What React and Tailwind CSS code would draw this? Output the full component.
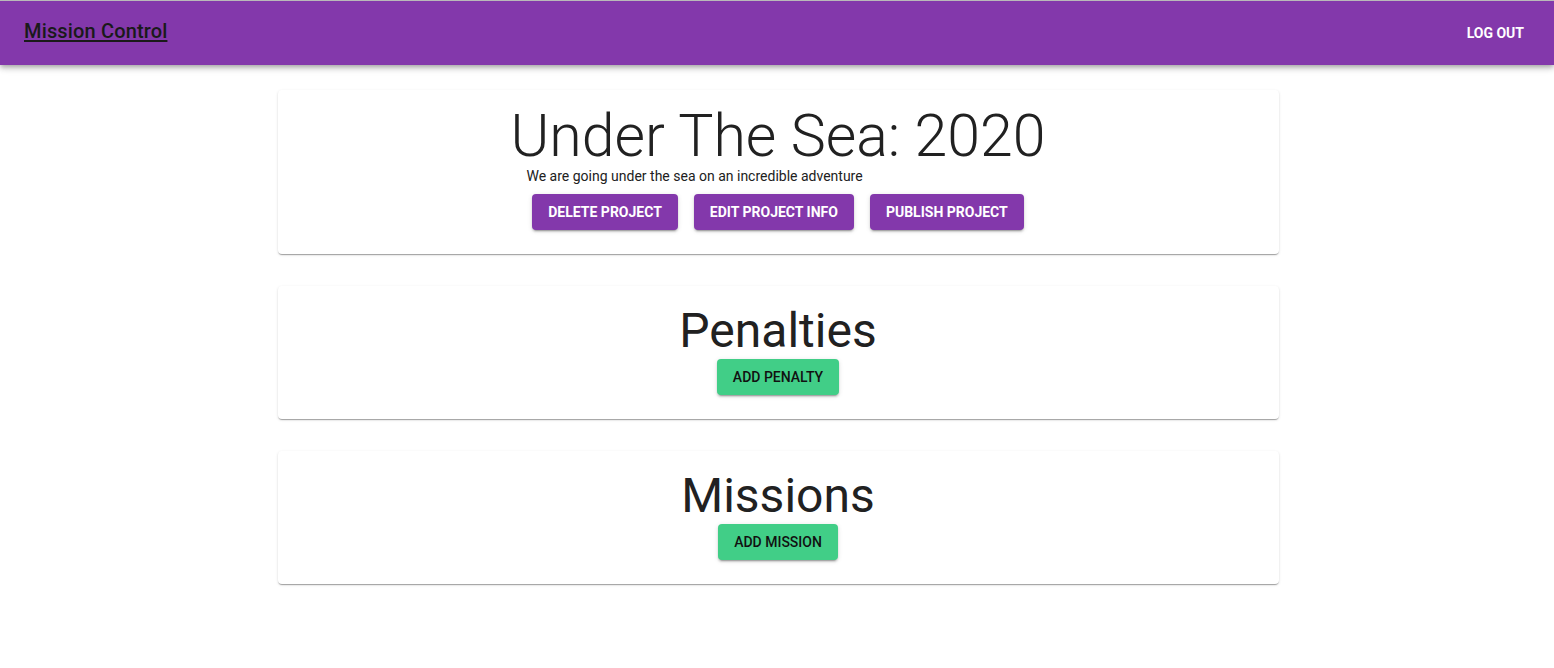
export default function App() {
  const purpleBtn =
    "bg-[#8338ab] text-white text-[14px] font-bold uppercase leading-[24px] px-4 py-[6px] rounded-[4px] shadow-[0_3px_1px_-2px_rgba(0,0,0,0.2),0_2px_2px_0_rgba(0,0,0,0.14),0_1px_5px_0_rgba(0,0,0,0.12)]";
  const greenBtn =
    "bg-[#41ce87] text-[#111] text-[14px] font-medium uppercase leading-[24px] px-4 py-[6px] rounded-[4px] shadow-[0_3px_1px_-2px_rgba(0,0,0,0.2),0_2px_2px_0_rgba(0,0,0,0.14),0_1px_5px_0_rgba(0,0,0,0.12)]";
  const card =
    "w-[1001px] mx-auto bg-white rounded-[4px] shadow-[0_2px_1px_-1px_rgba(0,0,0,0.2),0_1px_1px_0_rgba(0,0,0,0.14),0_1px_3px_0_rgba(0,0,0,0.12)] flex flex-col items-center pt-4 pb-6";
  return (
    <div className="min-h-[668px] bg-white font-['Roboto',sans-serif] text-[#212121]">
      <header className="h-[65px] bg-[#8338ab] border-t border-[#b9b9b9] flex items-center justify-between pl-6 pr-[22px] shadow-[0_2px_4px_-1px_rgba(0,0,0,0.2),0_4px_5px_0_rgba(0,0,0,0.14),0_1px_10px_0_rgba(0,0,0,0.12)]">
        <a className="text-[20px] font-medium tracking-[0.15px] text-[#1a1a1a] underline underline-offset-[2px] leading-[32px] mb-1">
          Mission Control
        </a>
        <button className="text-white text-[14px] font-bold uppercase leading-[24px] px-2 py-[6px]">
          Log Out
        </button>
      </header>
      <main className="flex flex-col gap-8 pt-[25px] pl-[2px]">
        <section className={card}>
          <div className="flex flex-col items-start">
            <h2 className="text-[59px] font-light leading-[60px]">Under The Sea: 2020</h2>
            <p className="text-[14px] leading-[20px] pl-4">
              We are going under the sea on an incredible adventure
            </p>
          </div>
          <div className="flex gap-4 mt-2">
            <button className={purpleBtn}>Delete Project</button>
            <button className={purpleBtn}>Edit Project Info</button>
            <button className={purpleBtn}>Publish Project</button>
          </div>
        </section>
        <section className={card}>
          <h3 className="text-[48px] leading-[57px] font-normal">Penalties</h3>
          <button className={greenBtn}>Add Penalty</button>
        </section>
        <section className={card}>
          <h3 className="text-[48px] leading-[57px] font-normal">Missions</h3>
          <button className={greenBtn}>Add Mission</button>
        </section>
      </main>
    </div>
  );
}
